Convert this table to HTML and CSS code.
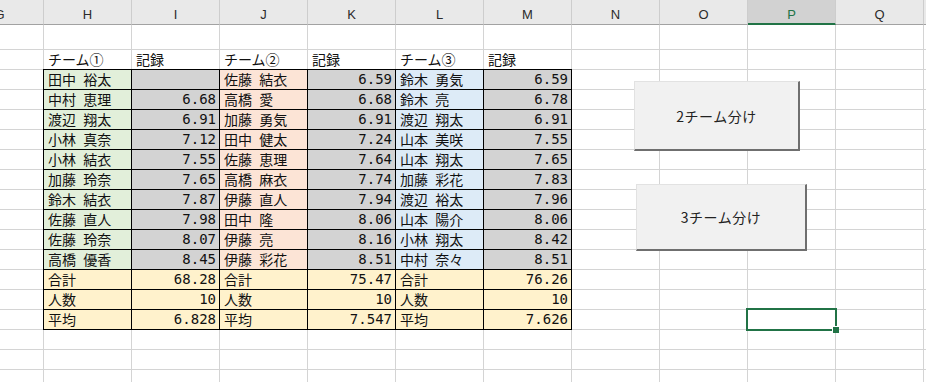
FILE: index.html
```html
<!DOCTYPE html>
<html lang="ja">
<head>
    <meta charset="UTF-8">
    <meta name="viewport" content="width=device-width, initial-scale=1.0">
    <title>チーム分け</title>
    <link rel="stylesheet" href="styles.css">
</head>
<body>
    <div class="page">
        <div class="sheet">
            <div class="col-headers">
                <div class="col-head">G</div>
                <div class="col-head">H</div>
                <div class="col-head">I</div>
                <div class="col-head">J</div>
                <div class="col-head">K</div>
                <div class="col-head">L</div>
                <div class="col-head">M</div>
                <div class="col-head">N</div>
                <div class="col-head">O</div>
                <div class="col-head active">P</div>
                <div class="col-head">Q</div>
                <div class="col-head"></div>
            </div>

            <div class="first-row"></div>

            <div class="cells">
                <div class="labels">
                    <div class="label">チーム①</div>
                    <div class="label">記録</div>
                    <div class="label">チーム②</div>
                    <div class="label">記録</div>
                    <div class="label">チーム③</div>
                    <div class="label">記録</div>
                </div>

                <div class="teams">
                    <div class="c t1">田中 裕太</div><div class="c rec num"></div>
                    <div class="c t2">佐藤 結衣</div><div class="c rec num">6.59</div>
                    <div class="c t3">鈴木 勇気</div><div class="c rec num">6.59</div>

                    <div class="c t1">中村 恵理</div><div class="c rec num">6.68</div>
                    <div class="c t2">高橋 愛</div><div class="c rec num">6.68</div>
                    <div class="c t3">鈴木 亮</div><div class="c rec num">6.78</div>

                    <div class="c t1">渡辺 翔太</div><div class="c rec num">6.91</div>
                    <div class="c t2">加藤 勇気</div><div class="c rec num">6.91</div>
                    <div class="c t3">渡辺 翔太</div><div class="c rec num">6.91</div>

                    <div class="c t1">小林 真奈</div><div class="c rec num">7.12</div>
                    <div class="c t2">田中 健太</div><div class="c rec num">7.24</div>
                    <div class="c t3">山本 美咲</div><div class="c rec num">7.55</div>

                    <div class="c t1">小林 結衣</div><div class="c rec num">7.55</div>
                    <div class="c t2">佐藤 恵理</div><div class="c rec num">7.64</div>
                    <div class="c t3">山本 翔太</div><div class="c rec num">7.65</div>

                    <div class="c t1">加藤 玲奈</div><div class="c rec num">7.65</div>
                    <div class="c t2">高橋 麻衣</div><div class="c rec num">7.74</div>
                    <div class="c t3">加藤 彩花</div><div class="c rec num">7.83</div>

                    <div class="c t1">鈴木 結衣</div><div class="c rec num">7.87</div>
                    <div class="c t2">伊藤 直人</div><div class="c rec num">7.94</div>
                    <div class="c t3">渡辺 裕太</div><div class="c rec num">7.96</div>

                    <div class="c t1">佐藤 直人</div><div class="c rec num">7.98</div>
                    <div class="c t2">田中 隆</div><div class="c rec num">8.06</div>
                    <div class="c t3">山本 陽介</div><div class="c rec num">8.06</div>

                    <div class="c t1">佐藤 玲奈</div><div class="c rec num">8.07</div>
                    <div class="c t2">伊藤 亮</div><div class="c rec num">8.16</div>
                    <div class="c t3">小林 翔太</div><div class="c rec num">8.42</div>

                    <div class="c t1">高橋 優香</div><div class="c rec num">8.45</div>
                    <div class="c t2">伊藤 彩花</div><div class="c rec num">8.51</div>
                    <div class="c t3">中村 奈々</div><div class="c rec num">8.51</div>

                    <!-- summary rows -->
                    <div class="c sum">合計</div><div class="c sum num">68.28</div>
                    <div class="c sum">合計</div><div class="c sum num">75.47</div>
                    <div class="c sum">合計</div><div class="c sum num">76.26</div>

                    <div class="c sum">人数</div><div class="c sum num">10</div>
                    <div class="c sum">人数</div><div class="c sum num">10</div>
                    <div class="c sum">人数</div><div class="c sum num">10</div>

                    <div class="c sum">平均</div><div class="c sum num">6.828</div>
                    <div class="c sum">平均</div><div class="c sum num">7.547</div>
                    <div class="c sum">平均</div><div class="c sum num">7.626</div>
                </div>

                <div class="selection"><span class="fill-handle"></span></div>
            </div>
        </div>

        <button class="macro-btn btn-two">2チーム分け</button>
        <button class="macro-btn btn-three">3チーム分け</button>
    </div>
</body>
</html>
```

FILE: styles.css
```css
* {
    margin: 0;
    padding: 0;
    box-sizing: border-box;
}

body {
    font-family: "Noto Sans CJK JP", sans-serif;
    font-size: 14px;
    background: #fff;
    color: #111;
    overflow: hidden;
}

.page {
    position: relative;
    width: 926px;
    height: 382px;
    overflow: hidden;
}

/* sheet starts inside column G, so shift it left */
.sheet {
    margin-left: -44px;
    width: 1056px;
}

.col-headers {
    display: flex;
    height: 25px;
    background: #e9e9e9;
}

.col-head {
    flex: none;
    width: 88px;
    height: 25px;
    padding-top: 5px;
    line-height: 19px;
    text-align: center;
    font-family: "Liberation Sans", Arial, sans-serif;
    font-size: 13px;
    color: #2b2b2b;
    border-right: 1px solid #cdcdcd;
    border-bottom: 1px solid #a2a2a2;
}

.col-head.active {
    background: #d2d2d2;
    color: #217346;
    border-bottom: 2px solid #217346;
}

.first-row {
    height: 25px;
    border-bottom: 1px solid #d4d4d4;
    background-image: linear-gradient(to right, transparent 87px, #d4d4d4 87px);
    background-size: 88px 100%;
}

.cells {
    display: grid;
    grid-template-columns: repeat(12, 88px);
    grid-template-rows: repeat(17, 20px);
    background-image:
        linear-gradient(to right, transparent 87px, #d4d4d4 87px),
        linear-gradient(to bottom, transparent 19px, #d4d4d4 19px);
    background-size: 88px 100%, 100% 20px;
}

.labels {
    grid-column: 2 / 8;
    grid-row: 1;
    display: grid;
    grid-template-columns: repeat(6, 88px);
}

.label {
    padding-left: 4px;
    line-height: 19px;
    white-space: nowrap;
}

/* bordered block: black gaps form the cell borders */
.teams {
    grid-column: 2 / 8;
    grid-row: 2 / 15;
    margin: -1px 0 0 -1px;
    align-self: start;
    justify-self: start;
    display: grid;
    grid-template-columns: repeat(6, 87px);
    grid-template-rows: repeat(13, 19px);
    gap: 1px;
    background: #000;
    border: 1px solid #000;
}

.c {
    padding: 0 3px 0 4px;
    line-height: 19px;
    white-space: nowrap;
    word-spacing: 4px;
    overflow: hidden;
}

.t1 { background: #e2efda; }
.t2 { background: #fce4d6; }
.t3 { background: #ddebf7; }
.rec { background: #d3d3d3; }
.sum { background: #fff2cc; }

.num {
    text-align: right;
    font-family: "DejaVu Sans Mono", monospace;
    font-size: 14px;
    word-spacing: 0;
}

.selection {
    grid-column: 10;
    grid-row: 14;
    margin: -2px -1px -1px -2px;
    border: 2px solid #217346;
    position: relative;
}

.fill-handle {
    position: absolute;
    right: -4px;
    bottom: -4px;
    width: 7px;
    height: 7px;
    background: #217346;
    border: 1px solid #fff;
    border-width: 1px 0 0 1px;
}

.macro-btn {
    position: absolute;
    background: #f1f1f1;
    border-top: 1px solid #e2e2e2;
    border-left: 1px solid #e2e2e2;
    border-right: 2px solid #6f6f6f;
    border-bottom: 2px solid #6f6f6f;
    font-family: "Noto Sans CJK JP", sans-serif;
    font-size: 14px;
    color: #222;
    letter-spacing: 0.5px;
}

.btn-two {
    left: 634px;
    top: 81px;
    width: 166px;
    height: 70px;
}

.btn-three {
    left: 636px;
    top: 184px;
    width: 171px;
    height: 67px;
}
```
